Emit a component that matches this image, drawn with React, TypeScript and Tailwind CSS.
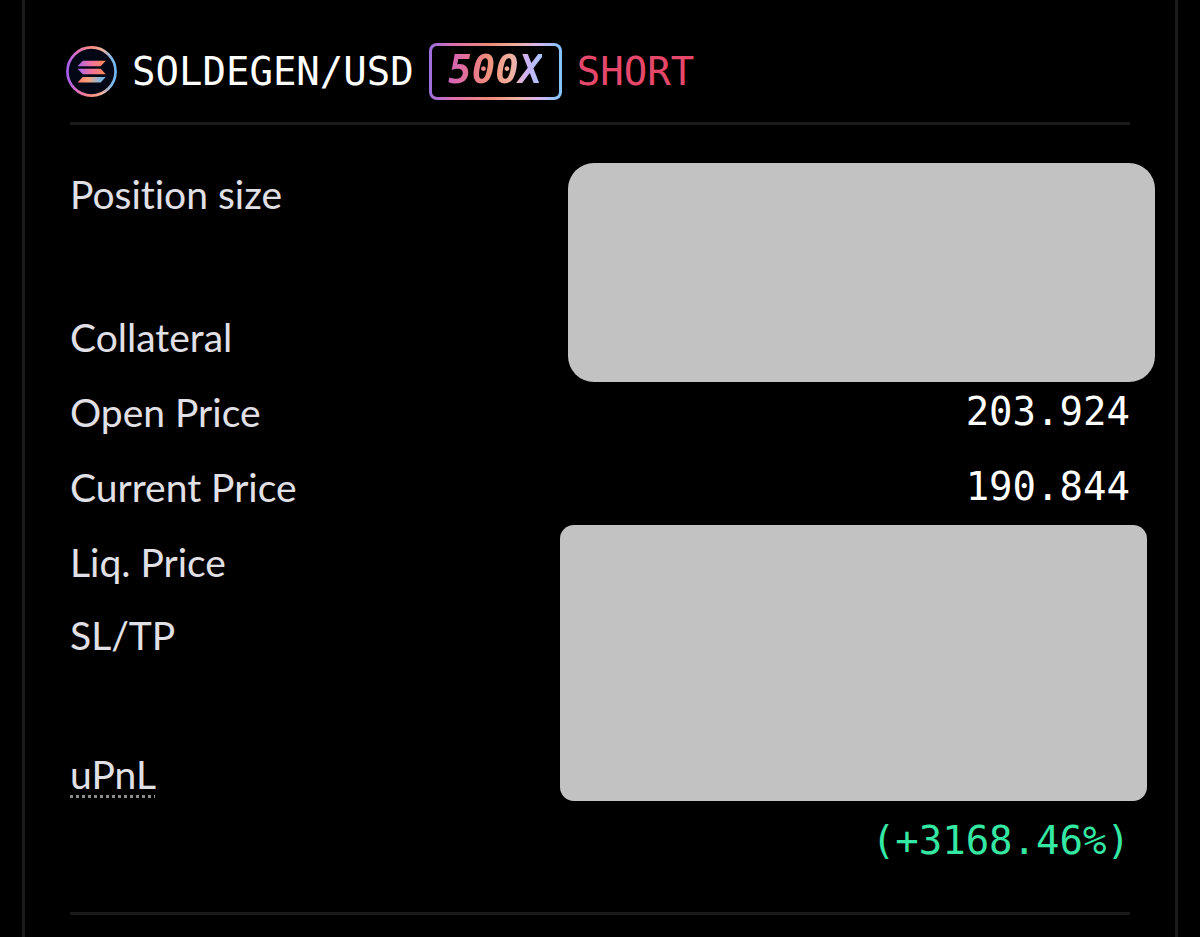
import type { ReactNode } from "react";

const MONO = "font-['DejaVu_Sans_Mono',monospace]";

function SolanaLogo() {
  return (
    <svg viewBox="0 0 50 50" className="-ml-1 size-[51px] shrink-0" aria-hidden="true">
      <defs>
        <linearGradient id="ring" x1="0" y1="0" x2="1" y2="0">
          <stop offset="0" stopColor="#a65df0" />
          <stop offset="0.22" stopColor="#e070b8" />
          <stop offset="0.48" stopColor="#fb8a80" />
          <stop offset="0.72" stopColor="#eeb09c" />
          <stop offset="0.9" stopColor="#8cb8e4" />
          <stop offset="1" stopColor="#6fb6f5" />
        </linearGradient>
        <linearGradient id="bar-warm" x1="0" y1="0" x2="1" y2="0">
          <stop offset="0" stopColor="#a866f0" />
          <stop offset="0.45" stopColor="#ee6fa4" />
          <stop offset="1" stopColor="#ff8a52" />
        </linearGradient>
        <linearGradient id="bar-cool" x1="0" y1="0" x2="1" y2="0">
          <stop offset="0" stopColor="#ff7d6c" />
          <stop offset="0.4" stopColor="#f5a37c" />
          <stop offset="0.7" stopColor="#9db4cc" />
          <stop offset="1" stopColor="#62b4f2" />
        </linearGradient>
      </defs>
      <circle cx="25" cy="25" r="23.6" fill="#040716" stroke="url(#ring)" strokeWidth="2.6" />
      <path d="M16.4 14.4H39L34 19.8H11.4Z" fill="url(#bar-warm)" />
      <path d="M11.4 22.4H34L39 27.8H16.4Z" fill="url(#bar-warm)" />
      <path d="M16.4 30.4H39L34 35.8H11.4Z" fill="url(#bar-cool)" />
    </svg>
  );
}

function LeverageBadge({ value }: { value: string }) {
  return (
    <div className="h-[57px] w-[133px] shrink-0 rounded-lg bg-[linear-gradient(90deg,#9a6fe0_0%,#e070a8_20%,#f08a78_45%,#eeb09c_65%,#d9b4ee_82%,#86c4fb_98%)] p-[3px]">
      <div className="flex h-full items-center justify-center rounded-[5px] bg-black pb-1">
        <span className="bg-[linear-gradient(90deg,#cf62bd_0%,#e8748f_25%,#f0937c_45%,#f0b2a0_68%,#cdb2f6_84%,#a8c8ff_100%)] bg-clip-text text-[39px] leading-[48px] font-bold text-transparent italic">
          {value}
        </span>
      </div>
    </div>
  );
}

function Row({
  label,
  className,
  children,
}: {
  label: ReactNode;
  className: string;
  children?: ReactNode;
}) {
  return (
    <div className={`relative flex items-start justify-between text-[39px] leading-[48px] ${className}`}>
      <dt className="text-[#e2e0e7] [font-variant-ligatures:none]">{label}</dt>
      <dd className={`${MONO} text-right text-white`}>{children}</dd>
    </div>
  );
}

export default function App() {
  return (
    <div className="min-h-screen bg-black px-[22px] font-['Lato',sans-serif]">
      <main className="min-h-screen border-x-[3px] border-[#1c1c1c] px-[45px] pt-[43px]">
        <header
          className={`${MONO} flex items-center gap-[15px] border-b-[3px] border-[#1a1a1a] pb-[22px] text-[39px] leading-[48px]`}
        >
          <SolanaLogo />
          <h1 className="text-white">SOLDEGEN/USD</h1>
          <LeverageBadge value="500X" />
          <span className="text-[#e5486a]">SHORT</span>
        </header>

        <dl className="border-b-[3px] border-[#1a1a1a] pt-[45px] pb-[47px]">
          <Row label="Position size" className="h-[143px]">
            {/* covers size and collateral */}
            <div className="absolute -top-[7px] -right-[25px] left-[47%] h-[219px] rounded-[26px] bg-[#c2c2c2]" />
          </Row>
          <Row label="Collateral" className="h-[75px]" />
          <Row label="Open Price" className="h-[75px]">
            203.924
          </Row>
          <Row label="Current Price" className="h-[75px]">
            190.844
          </Row>
          <Row label="Liq. Price" className="h-[73px]">
            {/* covers liq. price, SL/TP and the uPnL amount */}
            <div className="absolute -top-[13px] -right-[17px] left-[calc(47%-8px)] h-[276px] rounded-[14px] bg-[#c2c2c2]" />
          </Row>
          <Row label="SL/TP" className="h-[139px]" />
          <Row
            label={
              <span className="underline decoration-[#8c8c8c] decoration-dotted decoration-[3px] underline-offset-[6px]">
                uPnL
              </span>
            }
            className=""
          >
            <span className="mt-[67px] block text-[#34e8a4]">(+3168.46%)</span>
          </Row>
        </dl>
      </main>
    </div>
  );
}
